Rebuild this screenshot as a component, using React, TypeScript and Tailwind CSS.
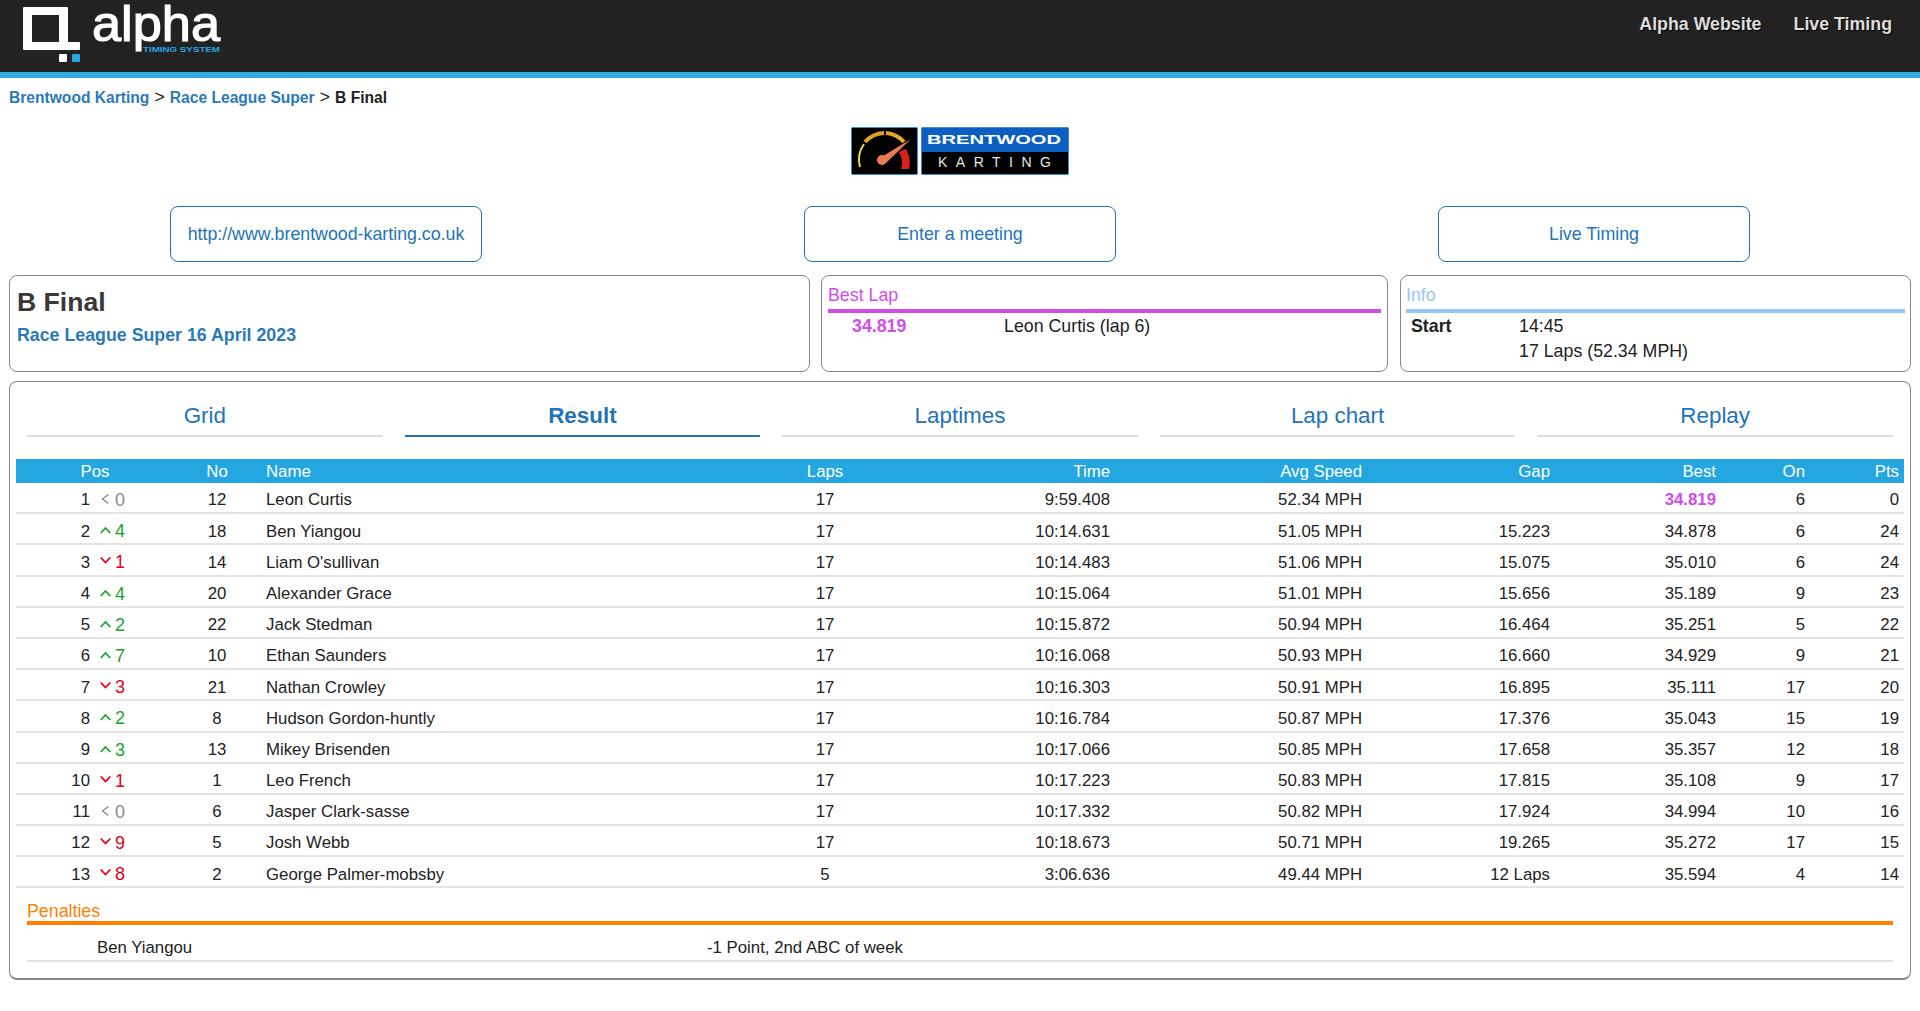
const rowCols =
  "grid grid-cols-[74px_84px_86px_500px_130px_225px_252px_188px_166px_89px_94px] items-center";

type Row = {
  pos: number;
  change: "up" | "down" | "same";
  diff: number;
  no: number;
  name: string;
  laps: number;
  time: string;
  speed: string;
  gap: string;
  best: string;
  on: number;
  pts: number;
};

const rows: Row[] = [
  { pos: 1, change: "same", diff: 0, no: 12, name: "Leon Curtis", laps: 17, time: "9:59.408", speed: "52.34 MPH", gap: "", best: "34.819", on: 6, pts: 0 },
  { pos: 2, change: "up", diff: 4, no: 18, name: "Ben Yiangou", laps: 17, time: "10:14.631", speed: "51.05 MPH", gap: "15.223", best: "34.878", on: 6, pts: 24 },
  { pos: 3, change: "down", diff: 1, no: 14, name: "Liam O'sullivan", laps: 17, time: "10:14.483", speed: "51.06 MPH", gap: "15.075", best: "35.010", on: 6, pts: 24 },
  { pos: 4, change: "up", diff: 4, no: 20, name: "Alexander Grace", laps: 17, time: "10:15.064", speed: "51.01 MPH", gap: "15.656", best: "35.189", on: 9, pts: 23 },
  { pos: 5, change: "up", diff: 2, no: 22, name: "Jack Stedman", laps: 17, time: "10:15.872", speed: "50.94 MPH", gap: "16.464", best: "35.251", on: 5, pts: 22 },
  { pos: 6, change: "up", diff: 7, no: 10, name: "Ethan Saunders", laps: 17, time: "10:16.068", speed: "50.93 MPH", gap: "16.660", best: "34.929", on: 9, pts: 21 },
  { pos: 7, change: "down", diff: 3, no: 21, name: "Nathan Crowley", laps: 17, time: "10:16.303", speed: "50.91 MPH", gap: "16.895", best: "35.111", on: 17, pts: 20 },
  { pos: 8, change: "up", diff: 2, no: 8, name: "Hudson Gordon-huntly", laps: 17, time: "10:16.784", speed: "50.87 MPH", gap: "17.376", best: "35.043", on: 15, pts: 19 },
  { pos: 9, change: "up", diff: 3, no: 13, name: "Mikey Brisenden", laps: 17, time: "10:17.066", speed: "50.85 MPH", gap: "17.658", best: "35.357", on: 12, pts: 18 },
  { pos: 10, change: "down", diff: 1, no: 1, name: "Leo French", laps: 17, time: "10:17.223", speed: "50.83 MPH", gap: "17.815", best: "35.108", on: 9, pts: 17 },
  { pos: 11, change: "same", diff: 0, no: 6, name: "Jasper Clark-sasse", laps: 17, time: "10:17.332", speed: "50.82 MPH", gap: "17.924", best: "34.994", on: 10, pts: 16 },
  { pos: 12, change: "down", diff: 9, no: 5, name: "Josh Webb", laps: 17, time: "10:18.673", speed: "50.71 MPH", gap: "19.265", best: "35.272", on: 17, pts: 15 },
  { pos: 13, change: "down", diff: 8, no: 2, name: "George Palmer-mobsby", laps: 5, time: "3:06.636", speed: "49.44 MPH", gap: "12 Laps", best: "35.594", on: 4, pts: 14 },
];

const tabs = ["Grid", "Result", "Laptimes", "Lap chart", "Replay"];

function AlphaLogo() {
  return (
    <svg width="240" height="72" viewBox="0 0 240 72">
      <path
        fillRule="evenodd"
        fill="#fff"
        d="M24 7H67a1 1 0 0 1 1 1V42H79a1 1 0 0 1 1 1V49a1 1 0 0 1-1 1H24a1 1 0 0 1-1-1V8a1 1 0 0 1 1-1ZM32 15V42H59V15Z"
      />
      <rect x="59" y="54" width="8" height="8" rx="1" fill="#fff" />
      <rect x="72" y="54" width="8" height="8" rx="1" fill="#29a8e0" />
      <text
        x="92"
        y="41"
        fill="#fff"
        stroke="#fff"
        strokeWidth="1.2"
        fontSize="50"
        textLength="128"
        lengthAdjust="spacingAndGlyphs"
        fontFamily="'Liberation Sans', sans-serif"
      >
        alpha
      </text>
      <text
        x="143"
        y="52"
        fill="#29a8e0"
        fontSize="8"
        fontWeight="700"
        textLength="77"
        lengthAdjust="spacingAndGlyphs"
        fontFamily="'Liberation Sans', sans-serif"
      >
        TIMING SYSTEM
      </text>
    </svg>
  );
}

function BrentwoodLogo() {
  return (
    <svg width="218" height="48" viewBox="0 0 218 48" className="block">
      <rect x="0.5" y="0.5" width="66" height="47" rx="1" fill="#000" stroke="#3f8be0" />
      <path d="M9 40A27 27 0 0 1 13 17" fill="none" stroke="#e8d84a" strokeWidth="2" />
      <path d="M14 15A27 27 0 0 1 33 6" fill="none" stroke="#e0a020" strokeWidth="4" />
      <path d="M35 6A27 27 0 0 1 53 15" fill="none" stroke="#e8a828" strokeWidth="4" />
      <path d="M55 22A27 27 0 0 1 58 42H50A20 20 0 0 0 48 25Z" fill="#d8201c" />
      <path d="M60 12L32 29L35 36Z" fill="#e87c50" />
      <circle cx="31" cy="33" r="5" fill="#e87c50" />
      <rect x="70.5" y="0.5" width="147" height="47" rx="1" fill="#000" stroke="#3f8be0" />
      <rect x="71" y="1" width="146" height="24" fill="#0c5fc0" />
      <text
        x="76"
        y="17"
        fill="#fff"
        fontSize="12"
        fontWeight="700"
        textLength="134"
        lengthAdjust="spacingAndGlyphs"
        fontFamily="'Liberation Sans', sans-serif"
      >
        BRENTWOOD
      </text>
      <text
        x="87"
        y="40"
        fill="#e8e8e8"
        fontSize="14"
        textLength="113"
        fontFamily="'Liberation Sans', sans-serif"
      >
        KARTING
      </text>
    </svg>
  );
}

function Change({ change, diff }: { change: Row["change"]; diff: number }) {
  const color =
    change === "up"
      ? "text-[#1aa32e]"
      : change === "down"
        ? "text-[#e0001b]"
        : "text-[#8c8c8c]";
  const d =
    change === "up"
      ? "M0.7 8L5.5 3L10.3 8"
      : change === "down"
        ? "M0.7 1.5L5.5 6.5L10.3 1.5"
        : "M8.5 0.5L2.5 5L8.5 9.5";
  return (
    <span className={`flex items-center pl-[10px] text-[18px] ${color}`}>
      <svg width="11" height="11" viewBox="0 0 11 11" className="mb-[1px] mr-[4px]">
        <path d={d} fill="none" stroke="currentColor" strokeWidth={change === "same" ? 1.4 : 1.8} />
      </svg>
      <span className="mt-[1px]">{diff}</span>
    </span>
  );
}

export default function App() {
  return (
    <div className="min-h-[1011px] bg-white text-[16.8px] text-[#222] font-['Liberation_Sans',Arial,sans-serif]">
      <nav className="flex h-[78px] items-start justify-between border-b-[6px] border-[#35a9e1] bg-[#222]">
        <AlphaLogo />
        <div className="flex gap-[32px] pr-[28px] pt-[11px] text-[17.8px] font-bold text-[#ddd] [text-shadow:1px_1px_1px_#000]">
          <span>Alpha Website</span>
          <span>Live Timing</span>
        </div>
      </nav>

      <div className="px-[9px] pt-[10px] text-[15.6px] font-bold leading-[18px]">
        <span className="text-[#2a7ab9]">Brentwood Karting</span>
        <span className="text-[18px] font-normal"> &gt; </span>
        <span className="text-[#2a7ab9]">Race League Super</span>
        <span className="text-[18px] font-normal"> &gt; </span>
        <span>B Final</span>
      </div>

      <div className="mt-[20px] flex justify-center">
        <BrentwoodLogo />
      </div>

      <div className="mt-[31px] grid grid-cols-3 px-[9px] text-[17.8px] text-[#2273b9]">
        <a className="mx-auto flex h-[56px] w-[312px] items-center justify-center rounded-[8px] border border-[#2273b9]">
          http://www.brentwood-karting.co.uk
        </a>
        <a className="mx-auto flex h-[56px] w-[312px] items-center justify-center rounded-[8px] border border-[#2273b9]">
          Enter a meeting
        </a>
        <a className="mx-auto flex h-[56px] w-[312px] items-center justify-center rounded-[8px] border border-[#2273b9]">
          Live Timing
        </a>
      </div>

      <div className="mt-[13px] flex gap-[11px] px-[9px] text-[17.8px]">
        <div className="h-[97px] w-[801px] rounded-[8px] border border-[#888] px-[7px] pt-[11px]">
          <div className="text-[26.6px] font-bold leading-[30px] text-[#383838]">B Final</div>
          <div className="mt-[7px] font-bold leading-[22px] text-[#2a7ab9]">
            Race League Super 16 April 2023
          </div>
        </div>
        <div className="h-[97px] w-[567px] rounded-[8px] border border-[#888] px-[6px] pt-[8px]">
          <div className="border-b-[4px] border-[#d24de8] pb-[3px] leading-[22px] text-[#d24de8]">
            Best Lap
          </div>
          <div className="flex pt-[1px] leading-[24px]">
            <span className="ml-[24px] w-[152px] font-bold text-[#d24de8]">34.819</span>
            <span>Leon Curtis (lap 6)</span>
          </div>
        </div>
        <div className="ml-[1px] h-[97px] w-[511px] rounded-[8px] border border-[#888] px-[5px] pt-[8px]">
          <div className="border-b-[4px] border-[#97c5f5] pb-[3px] leading-[22px] text-[#97c5f5]">
            Info
          </div>
          <div className="flex pt-[1px] leading-[24px]">
            <span className="ml-[5px] w-[108px] font-bold">Start</span>
            <span>14:45</span>
          </div>
          <div className="ml-[113px] pt-[1px] leading-[24px]">17 Laps (52.34 MPH)</div>
        </div>
      </div>

      <div className="mx-[9px] mt-[9px] h-[599px] rounded-[8px] border border-b-2 border-[#888] px-[6px]">
        <div className="flex gap-[22px] px-[11px] pt-[20px] text-[22.4px] leading-[28px] text-[#2273b9]">
          {tabs.map((t) => (
            <div
              key={t}
              className={
                t === "Result"
                  ? "flex-1 border-b-2 border-[#2273b9] pb-[5px] text-center font-bold"
                  : "flex-1 border-b-2 border-[#ddd] pb-[5px] text-center"
              }
            >
              {t}
            </div>
          ))}
        </div>

        <div className={`${rowCols} mt-[22px] h-[24px] bg-[#24a7e0] text-white`}>
          <span className="col-span-2 text-center">Pos</span>
          <span className="text-center">No</span>
          <span className="pl-[6px]">Name</span>
          <span className="text-center">Laps</span>
          <span className="pr-[5px] text-right">Time</span>
          <span className="pr-[5px] text-right">Avg Speed</span>
          <span className="pr-[5px] text-right">Gap</span>
          <span className="pr-[5px] text-right">Best</span>
          <span className="pr-[5px] text-right">On</span>
          <span className="pr-[5px] text-right">Pts</span>
        </div>

        {rows.map((r) => (
          <div key={r.pos} className={`${rowCols} h-[31.2px] border-b-2 border-[#e4e4e4] pt-[3px]`}>
            <span className="text-right">{r.pos}</span>
            <Change change={r.change} diff={r.diff} />
            <span className="text-center">{r.no}</span>
            <span className="pl-[6px]">{r.name}</span>
            <span className="text-center">{r.laps}</span>
            <span className="pr-[5px] text-right">{r.time}</span>
            <span className="pr-[5px] text-right">{r.speed}</span>
            <span className="pr-[5px] text-right">{r.gap}</span>
            <span
              className={
                r.pos === 1
                  ? "pr-[5px] text-right font-bold text-[#d24de8]"
                  : "pr-[5px] text-right"
              }
            >
              {r.best}
            </span>
            <span className="pr-[5px] text-right">{r.on}</span>
            <span className="pr-[5px] text-right">{r.pts}</span>
          </div>
        ))}

        <div className="mx-[11px] mt-[13px] border-b-[4px] border-[#ff8000] text-[17.8px] leading-[20px] text-[#ff8000]">
          Penalties
        </div>
        <div className="mx-[11px] flex h-[37px] items-center border-b-2 border-[#e4e4e4] pt-[10px]">
          <span className="ml-[70px] w-[610px]">Ben Yiangou</span>
          <span>-1 Point, 2nd ABC of week</span>
        </div>
      </div>
    </div>
  );
}
